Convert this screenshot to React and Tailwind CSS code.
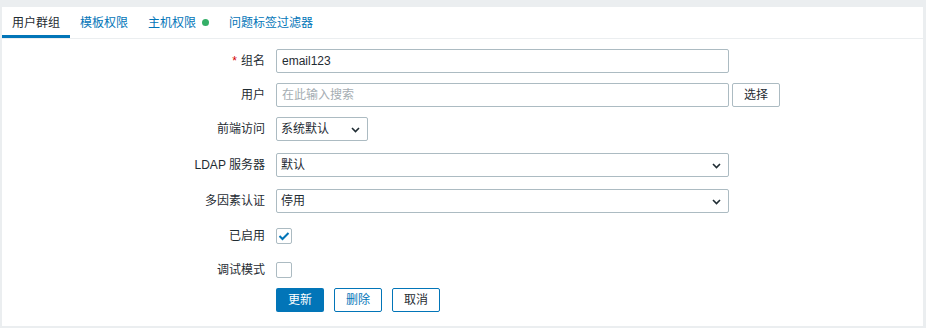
const font = { fontFamily: '"Liberation Sans", Arial, "Noto Sans CJK SC", sans-serif' };

function Chevron() {
  return (
    <svg width="9" height="6" viewBox="0 0 9 6" className="absolute right-[7px] top-[9px]">
      <path d="M1 1 L4.5 4.5 L8 1" fill="none" stroke="#1f2c33" strokeWidth="1.6" />
    </svg>
  );
}

function Row({ label, required, children, className = '' }) {
  return (
    <div className={`flex items-center ${className}`}>
      <div className="w-[274px] pr-[11px] text-right text-[12px] leading-[16px] text-[#1f2c33]">
        {required && <span className="text-[#d40000] mr-[4px]">*</span>}
        {label}
      </div>
      {children}
    </div>
  );
}

function Select({ value, width }) {
  return (
    <div
      className={`relative h-[24px] ${width} border border-[#acbbc2] rounded-[2px] bg-white flex items-center px-[4px] text-[12px] text-[#1f2c33]`}
    >
      {value}
      <Chevron />
    </div>
  );
}

function Checkbox({ checked }) {
  return (
    <div className="w-[16px] h-[16px] border border-[#acbbc2] rounded-[2px] bg-white flex items-center justify-center">
      {checked && (
        <svg width="12" height="10" viewBox="0 0 12 10">
          <path d="M1.5 5 L4.5 8 L10.5 2" fill="none" stroke="#0275b8" strokeWidth="2" />
        </svg>
      )}
    </div>
  );
}

export default function App() {
  return (
    <div style={font} className="w-[926px] h-[328px] bg-[#ebeef0] pt-[7px] pl-[2px] pr-[3px] pb-[2px]">
      <div className="bg-white h-full flex flex-col">
        {/* Tabs */}
        <div className="flex h-[32px] border-b border-[#ebeef0] text-[12px]">
          <div className="px-[10px] flex items-center text-[#1f2c33] border-b-[3px] border-[#0275b8] pt-[3px]">用户群组</div>
          <div className="px-[10px] flex items-center text-[#0275b8] pt-[3px] border-b-[3px] border-transparent">模板权限</div>
          <div className="px-[10px] flex items-center text-[#0275b8] pt-[3px] border-b-[3px] border-transparent">
            主机权限
            <span className="ml-[6px] w-[7px] h-[7px] rounded-full bg-[#34af67]" />
          </div>
          <div className="px-[10px] flex items-center text-[#0275b8] pt-[3px] border-b-[3px] border-transparent">问题标签过滤器</div>
        </div>

        {/* Form */}
        <div className="flex flex-col">
          <Row label="组名" required className="mt-[10px]">
            <div className="w-[453px] h-[24px] border border-[#acbbc2] rounded-[2px] flex items-center px-[5px] text-[12px] text-[#1f2c33]">
              email123
            </div>
          </Row>
          <Row label="用户" className="mt-[10px]">
            <div className="w-[453px] h-[24px] border border-[#acbbc2] rounded-[2px] flex items-center px-[5px] text-[12px] text-[#a5adb2]">
              在此输入搜索
            </div>
            <button className="ml-[3px] w-[48px] h-[24px] border border-[#acbbc2] rounded-[2px] bg-white text-[12px] text-[#1f2c33]">
              选择
            </button>
          </Row>
          <Row label="前端访问" className="mt-[10px]">
            <Select value="系统默认" width="w-[92px]" />
          </Row>
          <Row label="LDAP 服务器" className="mt-[12px]">
            <Select value="默认" width="w-[453px]" />
          </Row>
          <Row label="多因素认证" className="mt-[12px]">
            <Select value="停用" width="w-[453px]" />
          </Row>
          <Row label="已启用" className="mt-[15px]">
            <Checkbox checked />
          </Row>
          <Row label="调试模式" className="mt-[18px]">
            <Checkbox />
          </Row>
          <div className="flex mt-[10px] pl-[274px] gap-[10px] text-[12px]">
            <button className="w-[48px] h-[24px] rounded-[2px] bg-[#0275b8] text-white">更新</button>
            <button className="w-[48px] h-[24px] rounded-[2px] border border-[#0275b8] bg-white text-[#0275b8]">删除</button>
            <button className="w-[48px] h-[24px] rounded-[2px] border border-[#0275b8] bg-white text-[#1f2c33]">取消</button>
          </div>
        </div>
      </div>
    </div>
  );
}
